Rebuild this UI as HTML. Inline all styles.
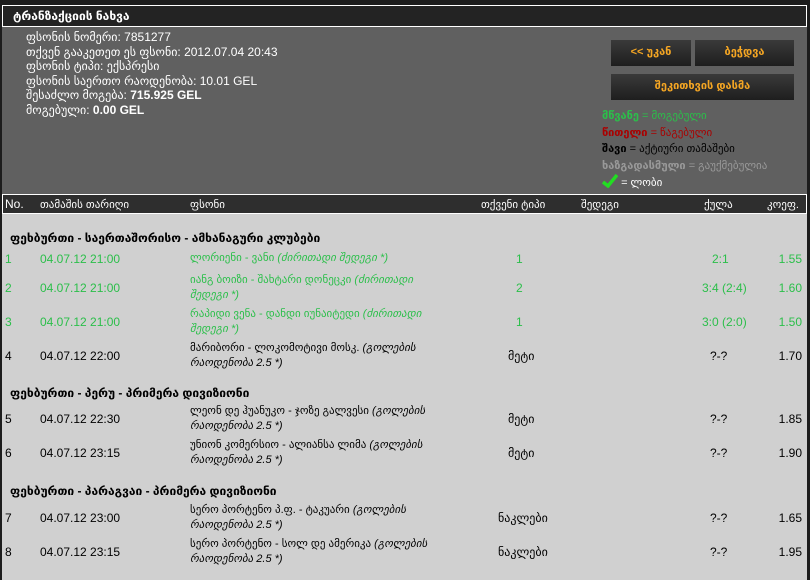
<!DOCTYPE html>
<html><head><meta charset="utf-8"><style>
*{margin:0;padding:0;box-sizing:border-box}
body{width:810px;height:580px;background:#1c1c1c;font-family:"Liberation Sans","DejaVu Sans",sans-serif;font-size:12px;color:#000;position:relative;overflow:hidden}
.a{position:absolute;white-space:nowrap}
#hdr{position:absolute;left:2px;top:5px;width:805px;height:22px;background:#232323;border:1px solid #fff;color:#fff;font-weight:bold;font-size:12px;padding:3px 0 0 10px}
#panel{position:absolute;left:2px;top:27px;width:805px;height:167px;background:#606060}
.info{color:#fff;font-size:12px;line-height:14.5px}
.btn{position:absolute;background:linear-gradient(#3a3a3a,#1e1e1e);color:#f5a623;font-weight:bold;font-size:11px;text-align:center;line-height:25px;height:26px}
#th{position:absolute;left:2px;top:194px;width:805px;height:20px;background:#2e2e2e;border:1px solid #fff;color:#fff;font-size:11px}
#tb{position:absolute;left:2px;top:214px;width:805px;height:366px;background:#d0d0d0}
.g{color:#2bbf4a}
.grp{font-weight:bold;font-size:12px}
.bet{width:245px;white-space:normal;line-height:15px;font-size:11px}
.r{text-align:right}
</style></head><body>
<div id="hdr">ტრანზაქციის ნახვა</div>
<div id="panel">
<div class="a info" style="left:24px;top:3px">ფსონის ნომერი: 7851277<br>თქვენ გააკეთეთ ეს ფსონი: 2012.07.04 20:43<br>ფსონის ტიპი: ექსპრესი<br>ფსონის საერთო რაოდენობა: 10.01 GEL<br>შესაძლო მოგება: <b>715.925 GEL</b><br>მოგებული: <b>0.00 GEL</b></div>
<div class="btn" style="left:609px;top:13px;width:80px">&lt;&lt; უკან</div>
<div class="btn" style="left:693px;top:13px;width:99px">ბეჭდვა</div>
<div class="btn" style="left:609px;top:47px;width:183px">შეკითხვის დასმა</div>
<div class="a" style="left:600px;top:81px;font-size:11px;line-height:16.5px">
<span style="color:#2bbf4a"><b>მწვანე</b> = მოგებული</span><br>
<span style="color:#a00"><b>წითელი</b> = წაგებული</span><br>
<span style="color:#000"><b>შავი</b> = აქტიური თამაშები</span><br>
<span style="color:#999"><b>ხაზგადასმული</b> = გაუქმებულია</span><br>
<svg width="16" height="14" viewBox="0 0 16 14" style="vertical-align:-2px"><path d="M1 8 L6 12 L15 1" stroke="#22dd22" stroke-width="3.5" fill="none"/></svg> <span style="color:#fff">= ლობი</span></div>
</div>
<div id="th">
<span class="a" style="left:2px;top:2px;font-size:12px">No.</span>
<span class="a" style="left:37px;top:3px">თამაშის თარიღი</span>
<span class="a" style="left:187px;top:3px">ფსონი</span>
<span class="a" style="left:478px;top:3px">თქვენი ტიპი</span>
<span class="a" style="left:578px;top:3px">შედეგი</span>
<span class="a" style="left:701px;top:3px">ქულა</span>
<span class="a" style="left:764px;top:3px">კოეფ.</span>
</div>
<div id="tb">
<div class="a grp" style="left:8px;top:17px">ფეხბურთი - საერთაშორისო - ამხანაგური კლუბები</div>

<div class="a g" style="left:3px;top:38px">1</div><div class="a g" style="left:38px;top:38px">04.07.12 21:00</div><div class="a g bet" style="left:188px;top:37px">ლორიენი - ვანი <i>(ძირითადი შედეგი *)</i></div><div class="a g" style="left:514px;top:38px">1</div><div class="a g" style="left:710px;top:38px">2:1</div><div class="a g r" style="left:760px;top:38px;width:40px">1.55</div>

<div class="a g" style="left:3px;top:67px">2</div><div class="a g" style="left:38px;top:67px">04.07.12 21:00</div><div class="a g bet" style="left:188px;top:59px">იანგ ბოიზი - შახტარი დონეცკი <i>(ძირითადი შედეგი *)</i></div><div class="a g" style="left:514px;top:67px">2</div><div class="a g" style="left:700px;top:67px">3:4 (2:4)</div><div class="a g r" style="left:760px;top:67px;width:40px">1.60</div>

<div class="a g" style="left:3px;top:101px">3</div><div class="a g" style="left:38px;top:101px">04.07.12 21:00</div><div class="a g bet" style="left:188px;top:93px">რაპიდი ვენა - დანდი იუნაიტედი <i>(ძირითადი შედეგი *)</i></div><div class="a g" style="left:514px;top:101px">1</div><div class="a g" style="left:700px;top:101px">3:0 (2:0)</div><div class="a g r" style="left:760px;top:101px;width:40px">1.50</div>

<div class="a" style="left:3px;top:135px">4</div><div class="a" style="left:38px;top:135px">04.07.12 22:00</div><div class="a bet" style="left:188px;top:127px">მარიბორი - ლოკომოტივი მოსკ. <i>(გოლების რაოდენობა 2.5 *)</i></div><div class="a" style="left:506px;top:135px">მეტი</div><div class="a" style="left:708px;top:135px">?-?</div><div class="a r" style="left:760px;top:135px;width:40px">1.70</div>

<div class="a grp" style="left:8px;top:172px">ფეხბურთი - პერუ - პრიმერა დივიზიონი</div>

<div class="a" style="left:3px;top:198px">5</div><div class="a" style="left:38px;top:198px">04.07.12 22:30</div><div class="a bet" style="left:188px;top:190px">ლეონ დე ჰუანუკო - ჯოზე გალვესი <i>(გოლების რაოდენობა 2.5 *)</i></div><div class="a" style="left:506px;top:198px">მეტი</div><div class="a" style="left:708px;top:198px">?-?</div><div class="a r" style="left:760px;top:198px;width:40px">1.85</div>

<div class="a" style="left:3px;top:232px">6</div><div class="a" style="left:38px;top:232px">04.07.12 23:15</div><div class="a bet" style="left:188px;top:224px">უნიონ კომერსიო - ალიანსა ლიმა <i>(გოლების რაოდენობა 2.5 *)</i></div><div class="a" style="left:506px;top:232px">მეტი</div><div class="a" style="left:708px;top:232px">?-?</div><div class="a r" style="left:760px;top:232px;width:40px">1.90</div>

<div class="a grp" style="left:8px;top:270px">ფეხბურთი - პარაგვაი - პრიმერა დივიზიონი</div>

<div class="a" style="left:3px;top:297px">7</div><div class="a" style="left:38px;top:297px">04.07.12 23:00</div><div class="a bet" style="left:188px;top:289px">სერო პორტენო პ.ფ. - ტაკუარი <i>(გოლების რაოდენობა 2.5 *)</i></div><div class="a" style="left:496px;top:297px">ნაკლები</div><div class="a" style="left:708px;top:297px">?-?</div><div class="a r" style="left:760px;top:297px;width:40px">1.65</div>

<div class="a" style="left:3px;top:331px">8</div><div class="a" style="left:38px;top:331px">04.07.12 23:15</div><div class="a bet" style="left:188px;top:323px">სერო პორტენო - სოლ დე ამერიკა <i>(გოლების რაოდენობა 2.5 *)</i></div><div class="a" style="left:496px;top:331px">ნაკლები</div><div class="a" style="left:708px;top:331px">?-?</div><div class="a r" style="left:760px;top:331px;width:40px">1.95</div>
</div>
</body></html>
